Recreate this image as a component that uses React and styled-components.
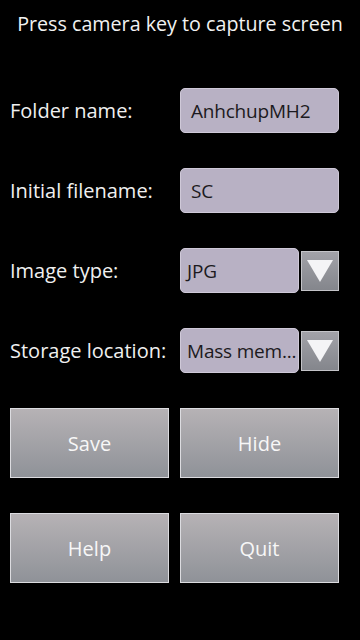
import React from 'react';
import styled, { createGlobalStyle } from 'styled-components';

const Global = createGlobalStyle`
  html, body {
    margin: 0;
    padding: 0;
    background: #000;
  }
  body {
    font-family: "Open Sans", "DejaVu Sans", sans-serif;
  }
`;

const Screen = styled.div`
  width: 360px;
  height: 640px;
  background: #000;
  display: flex;
  flex-direction: column;
  gap: 35px;
  padding: 0 21px 0 10px;
  box-sizing: border-box;
`;

const Title = styled.div`
  height: 53px;
  box-sizing: border-box;
  padding-bottom: 6px;
  margin: 0 -11px 0 0;
  display: flex;
  align-items: center;
  justify-content: center;
  color: #f2f2f2;
  font-size: 19.7px;
  white-space: nowrap;
`;

const Row = styled.div`
  display: flex;
  align-items: center;
  height: 45px;
`;

const Label = styled.div`
  width: 170px;
  flex: none;
  color: #f0f0f0;
  font-size: 20px;
  white-space: nowrap;
`;

const Field = styled.div`
  flex: 1;
  min-width: 0;
  height: 45px;
  box-sizing: border-box;
  display: flex;
  align-items: center;
  padding: 0 ${p => (p.$select ? 6 : 10)}px;
  background: #b8b1c4;
  border: 1px solid #cfc9d8;
  border-radius: 5px;
  color: #1c1a20;
  font-size: 19px;
  letter-spacing: -0.2px;
  white-space: nowrap;
  overflow: hidden;
`;

const Select = styled.div`
  flex: 1;
  min-width: 0;
  display: flex;
  align-items: center;
  gap: 2px;
`;

const ArrowButton = styled.div`
  width: 38px;
  height: 40px;
  flex: none;
  box-sizing: border-box;
  display: flex;
  align-items: center;
  justify-content: center;
  background: linear-gradient(#a2a2a8, #84868c);
  border: 1px solid #c4c4c8;
`;

const ButtonGrid = styled.div`
  display: grid;
  grid-template-columns: 1fr 1fr;
  column-gap: 11px;
  row-gap: 35px;
`;

const Button = styled.div`
  height: 70px;
  box-sizing: border-box;
  display: flex;
  align-items: center;
  justify-content: center;
  background: linear-gradient(#b6b2b5, #8f9298);
  border: 1px solid #dcdce0;
  color: #f7f7f7;
  font-size: 20px;
`;

const Arrow = () => (
  <svg width="30" height="26" viewBox="0 0 30 26">
    <polygon points="2,2 28,2 15,24" fill="#f4f4f6" />
  </svg>
);

export default function App() {
  return (
    <>
      <Global />
      <Screen>
        <Title>Press camera key to capture screen</Title>
        <Row>
          <Label>Folder name:</Label>
          <Field>AnhchupMH2</Field>
        </Row>
        <Row>
          <Label>Initial filename:</Label>
          <Field>SC</Field>
        </Row>
        <Row>
          <Label>Image type:</Label>
          <Select>
            <Field $select>JPG</Field>
            <ArrowButton><Arrow /></ArrowButton>
          </Select>
        </Row>
        <Row>
          <Label>Storage location:</Label>
          <Select>
            <Field $select>Mass mem...</Field>
            <ArrowButton><Arrow /></ArrowButton>
          </Select>
        </Row>
        <ButtonGrid>
          <Button>Save</Button>
          <Button>Hide</Button>
          <Button>Help</Button>
          <Button>Quit</Button>
        </ButtonGrid>
      </Screen>
    </>
  );
}
